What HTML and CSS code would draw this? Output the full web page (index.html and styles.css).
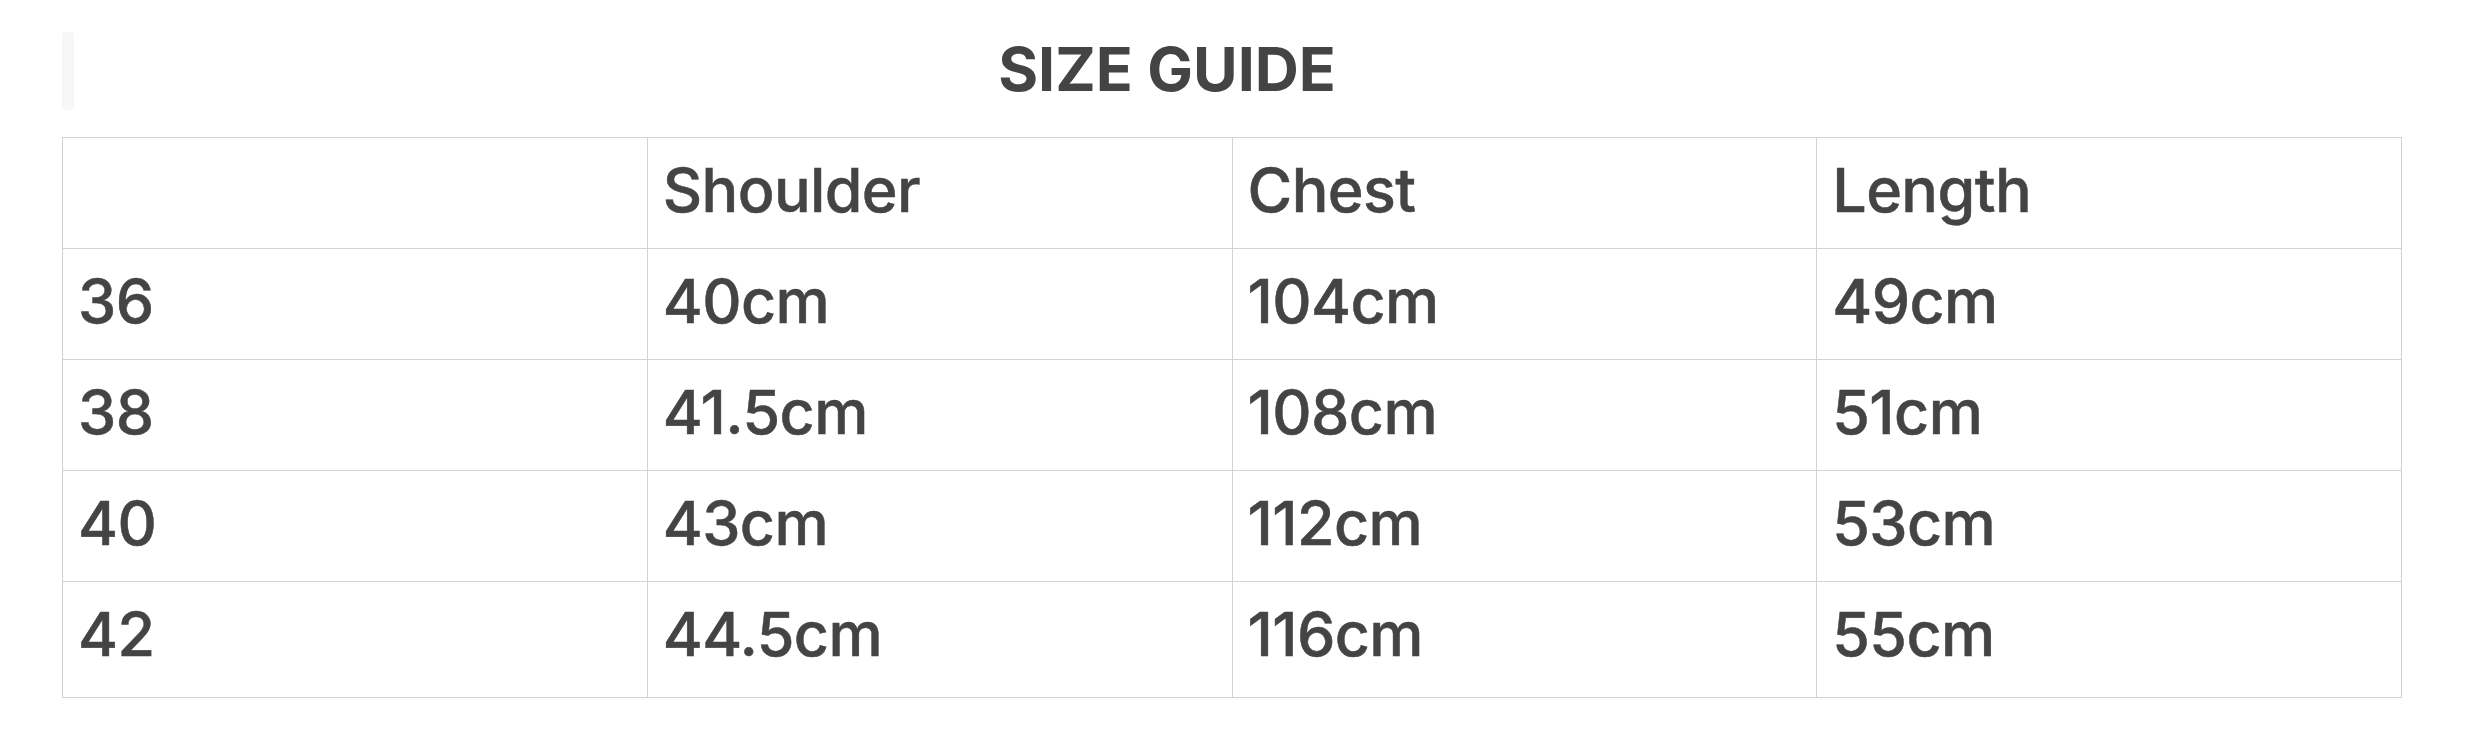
FILE: index.html
```html
<!DOCTYPE html>
<html lang="en">
<head>
<meta charset="utf-8">
<title>Size Guide</title>
<link rel="stylesheet" href="styles.css">
</head>
<body>
<div class="page">
  <div class="title-row">
    <div class="tab-mark"></div>
    <h1 class="title">SIZE GUIDE</h1>
    <div class="title-spacer"></div>
  </div>
  <table class="size-table">
    <tr>
      <td></td>
      <td>Shoulder</td>
      <td>Chest</td>
      <td>Length</td>
    </tr>
    <tr>
      <td>36</td>
      <td>40cm</td>
      <td>104cm</td>
      <td>49cm</td>
    </tr>
    <tr>
      <td>38</td>
      <td>41.5cm</td>
      <td>108cm</td>
      <td>51cm</td>
    </tr>
    <tr>
      <td>40</td>
      <td>43cm</td>
      <td>112cm</td>
      <td>53cm</td>
    </tr>
    <tr class="last-row">
      <td>42</td>
      <td>44.5cm</td>
      <td>116cm</td>
      <td>55cm</td>
    </tr>
  </table>
</div>
</body>
</html>
```

FILE: styles.css
```css
html, body {
  margin: 0;
  padding: 0;
  background: #ffffff;
}

body {
  font-family: Inter, "Liberation Sans", Arial, sans-serif;
  color: #444444;
}

.page {
  padding: 32px 0 0 62px;
  width: 2340px;
}

.title-row {
  display: flex;
  align-items: stretch;
  height: 78px;
}

.tab-mark {
  width: 12px;
  background: #f7f7f7;
  border-radius: 4px;
}

.title {
  flex: 1;
  margin: 0;
  text-align: center;
  font-size: 61px;
  font-weight: 700;
  line-height: 75px;
  padding-bottom: 3px;
  color: #444444;
}

.title-spacer {
  width: 142px;
}

.size-table {
  margin-top: 27px;
  width: 2340px;
  border-collapse: collapse;
  table-layout: fixed;
}

.size-table td {
  border: 1px solid #d2d2d2;
  padding: 17px 15px 22px;
  font-size: 61px;
  font-weight: 500;
  letter-spacing: -0.6px;
  line-height: 71px;
  color: #444444;
  -webkit-text-stroke: 0.5px #444444;
  text-align: left;
  vertical-align: top;
}

.size-table .last-row td {
  padding-bottom: 27px;
}
```
